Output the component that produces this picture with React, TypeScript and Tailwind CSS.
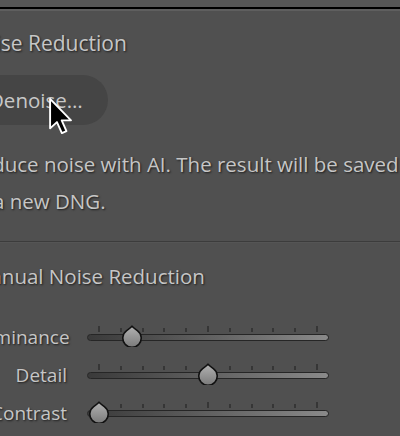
import React from 'react';

// Cropped Lightroom "Detail" panel: Noise Reduction section with sliders.

const shadow = '[text-shadow:1px_1px_2px_rgba(0,0,0,0.65)]';

type SliderRowProps = {
    label: string;
    value: number; // 0..100
};

const ticks = Array.from({ length: 11 }, (_, i) => i);

const Thumb: React.FC = () => (
    <svg width="22" height="22" viewBox="0 0 22 22">
        <defs>
            <linearGradient id="thumbFill" x1="0" y1="0" x2="0" y2="1">
                <stop offset="0" stopColor="#b2b2b2" />
                <stop offset="1" stopColor="#7a7a7a" />
            </linearGradient>
        </defs>
        <path
            d="M11 1.2 Q9.8 2.6 5.66 5.6 A9.2 9.2 0 1 0 16.34 5.6 Q12.2 2.6 11 1.2 Z"
            fill="url(#thumbFill)"
            stroke="#111"
            strokeWidth="1.6"
            strokeLinejoin="round"
        />
    </svg>
);

const SliderRow: React.FC<SliderRowProps> = ({ label, value }) => (
    <div className="flex items-center h-[38px]">
        <div className={`w-[95px] text-right text-[19px] text-[#c6c6c6] whitespace-nowrap ${shadow}`}>{label}</div>
        <div className="relative ml-[20px] w-[242px] flex flex-col">
            <div className="flex justify-between items-end h-[6px] px-[11px]">
                {ticks.map((t) => (
                    <div
                        key={t}
                        className={
                            t === 0 || t === 5 || t === 10
                                ? 'w-[2px] h-[6px] bg-[#363636]'
                                : 'w-[2px] h-[4px] bg-[#363636]'
                        }
                    />
                ))}
            </div>
            <div className="mt-[2px] h-[7px] rounded-full border-[1.5px] border-[#262626] bg-gradient-to-r from-[#3a3a3a] to-[#8a8a8a]" />
            <div className="h-[8px]" />
            <div
                className="absolute top-[-0.5px]"
                style={{ left: `${12 + (218 * value) / 100 - 11}px` }}
            >
                <Thumb />
            </div>
        </div>
    </div>
);

const Cursor: React.FC = () => (
    <svg width="27" height="38" viewBox="0 0 14 20" className="absolute left-[48px] top-[97px]">
        <path
            d="M1 1 L1 16.5 L4.6 13.2 L7.2 19 L9.6 18 L7.1 12.3 L12 12.3 Z"
            fill="#000"
            stroke="#fff"
            strokeWidth="1"
            strokeLinejoin="round"
        />
    </svg>
);

const App: React.FC = () => {
    return (
        <div
            className="relative w-[400px] h-[436px] overflow-hidden bg-[#505050] text-[#c6c6c6]"
            style={{ fontFamily: '"Open Sans", "Noto Sans", sans-serif' }}
        >
            <div className="h-[7px] bg-[#575757]" />
            <div className="h-[2px] bg-black" />
            <div className="h-[2px] bg-[#5f5f5f]" />

            <div className="-ml-[28px] w-[470px]">
                <div className={`-ml-[5px] mt-[18px] h-[28px] leading-[28px] text-[21px] whitespace-nowrap ${shadow}`}>
                    Noise Reduction
                </div>

                <button className="mt-[18px] h-[50px] -ml-[4px] pl-[21px] pr-[25px] rounded-full bg-[#454545] text-[20.5px] text-[#c8c8c8] flex items-center">
                    Denoise…
                </button>

                <div className={`-ml-[4px] mt-[21px] text-[20.5px] leading-[37px] whitespace-nowrap ${shadow}`}>
                    Reduce noise with AI. The result will be saved
                    <br />
                    to a new DNG.
                </div>
            </div>

            <div className="mt-[21px] h-[1px] bg-[#3c3c3c]" />
            <div className="h-[1px] bg-[#555555]" />

            <div className="-ml-[28px] w-[470px]">
                <div className={`mt-[19px] h-[28px] leading-[28px] text-[20.5px] whitespace-nowrap ${shadow}`}>
                    Manual Noise Reduction
                </div>

                <div className="mt-[28px] flex flex-col">
                    <SliderRow label="Luminance" value={15} />
                    <SliderRow label="Detail" value={50} />
                    <SliderRow label="Contrast" value={0} />
                </div>
            </div>

            <Cursor />
        </div>
    );
};

export default App;
